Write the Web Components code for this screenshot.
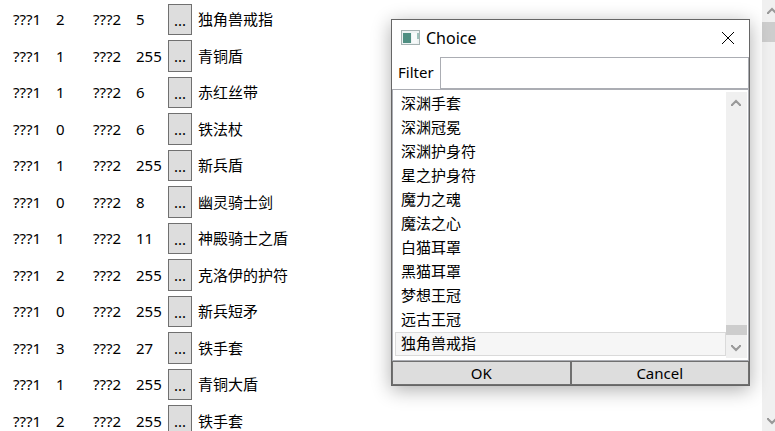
<!DOCTYPE html>
<html lang="zh-CN">
<head>
<meta charset="utf-8">
<title>Choice</title>
<style>
  body {
    margin: 0;
    height: 100vh;
    overflow: hidden;
    background-color: #fff;
    color: #000;
    font: 15px/24px "Noto Sans", "Noto Sans CJK SC", sans-serif;
  }
</style>
</head>
<body>
<item-editor></item-editor>

<script>
class ScrollStrip extends HTMLElement {
  constructor() {
    super();
    this.attachShadow({ mode: "open" });
  }

  connectedCallback() {
    this.shadowRoot.innerHTML = `
    <style>
      :host {
        display: flex;
        flex-direction: column;
        align-items: center;
        background-color: #f0f0f0;
      }
      svg {
        flex: none;
        width: 21px;
        height: 21px;
        fill: none;
        stroke: #999;
        stroke-width: 2;
      }
      .track {
        flex: 1;
        align-self: stretch;
        display: flex;
        flex-direction: column;
        padding: 1px 0 2px;
      }
      :host([at="end"]) .track {
        justify-content: flex-end;
      }
      .thumb {
        height: var(--thumb, 20px);
        background-color: #cdcdcd;
      }
    </style>
    <svg viewBox="0 0 21 21"><path d="M6 14v-1l4-4 4 4v1" /></svg>
    <div class="track"><div class="thumb"></div></div>
    <svg viewBox="0 0 21 21"><path d="M6 8v1l4 4 4-4V8" /></svg>
    `;
  }
}

class ItemRow extends HTMLElement {
  constructor() {
    super();
    this.attachShadow({ mode: "open" });
  }

  connectedCallback() {
    this.shadowRoot.innerHTML = `
    <style>
      :host {
        display: grid;
        grid-template-columns: 43px 37px 43px 32px 24px auto;
        justify-content: start;
        align-items: center;
        white-space: nowrap;
      }
      span {
        padding-bottom: 1px;
      }
      button {
        align-self: stretch;
        padding: 0;
        border: 1px solid #707070;
        background-color: #ddd;
        color: inherit;
        font: inherit;
      }
      .name {
        padding-left: 6px;
      }
    </style>
    <span>???1</span>
    <span>${this.getAttribute("first")}</span>
    <span>???2</span>
    <span>${this.getAttribute("second")}</span>
    <button type="button">...</button>
    <span class="name"><slot></slot></span>
    `;
  }
}

class ChoiceDialog extends HTMLElement {
  constructor() {
    super();
    this.attachShadow({ mode: "open" });
  }

  connectedCallback() {
    const options = this.getAttribute("options").split(",");
    const items = options.map((name, i) =>
      `<li role="option" aria-selected="${i === options.length - 1}">${name}</li>`
    ).join("");

    this.shadowRoot.innerHTML = `
    <style>
      * {
        box-sizing: border-box;
      }
      :host {
        display: block;
        box-sizing: border-box;
        border: 1px solid #666;
        background-color: #fff;
        box-shadow: 0 4px 18px rgba(0, 0, 0, 0.32);
      }
      header {
        display: flex;
        align-items: center;
        gap: 6px;
        height: 37px;
        padding: 0 10px 2px 9px;
        font-size: 16px;
      }
      .icon {
        width: 19px;
        height: 15px;
      }
      .title {
        flex: 1;
      }
      button {
        padding: 0;
        border: 1px solid #707070;
        background-color: #ddd;
        color: inherit;
        font: inherit;
      }
      .close {
        display: grid;
        place-items: center;
        width: 22px;
        height: 22px;
        border: 0;
        background: none;
      }
      .filter {
        display: flex;
        align-items: center;
        padding-left: 6px;
      }
      label {
        width: 42px;
        padding-bottom: 2px;
      }
      input {
        flex: 1;
        min-width: 0;
        height: 32px;
        border: 1px solid #abadb3;
        border-radius: 0;
        outline: 0;
        font: inherit;
      }
      .list {
        display: flex;
        padding: 2px 1px 2px 2px;
        border: 1px solid #abadb3;
      }
      ul {
        flex: 1;
        margin: 0 0 2px;
        padding: 0;
        list-style: none;
      }
      li {
        height: 24px;
        padding: 0 5px;
        border: 1px solid transparent;
        line-height: 20px;
      }
      li[aria-selected="true"] {
        border-color: #dadada;
        background-color: #f6f6f6;
      }
      scroll-strip {
        --thumb: 10px;
        width: 21px;
      }
      footer {
        display: grid;
        grid-template-columns: 1fr 1fr;
        height: 24px;
      }
      footer button {
        line-height: 20px;
      }
    </style>
    <header>
      <svg class="icon" viewBox="0 0 19 15">
        <rect x=".5" y=".5" width="18" height="14" fill="#eef3f3" stroke="#a5b2b2" />
        <path d="M2 3h8v10H2z" fill="#4f8f82" />
        <path d="M11 3h5v10h-5z" fill="#f7fafa" />
        <path d="M17 3v6" stroke="#4f8f82" />
      </svg>
      <span class="title">Choice</span>
      <button class="close" type="button" aria-label="Close">
        <svg width="12" height="12" viewBox="0 0 12 12"><path d="M0 0l12 12M12 0L0 12" stroke="#000" /></svg>
      </button>
    </header>
    <div class="filter">
      <label for="filter">Filter</label>
      <input id="filter" type="text">
    </div>
    <div class="list">
      <ul role="listbox" aria-label="Choice">${items}</ul>
      <scroll-strip at="end"></scroll-strip>
    </div>
    <footer>
      <button type="button">OK</button>
      <button type="button">Cancel</button>
    </footer>
    `;
  }
}

class ItemEditor extends HTMLElement {
  constructor() {
    super();
    this.attachShadow({ mode: "open" });
  }

  connectedCallback() {
    this.shadowRoot.innerHTML = `
    <style>
      :host {
        display: flex;
        position: relative;
        height: 100%;
        overflow: hidden;
      }
      .rows {
        flex: 1;
        display: grid;
        grid-auto-rows: 31px 32px;
        row-gap: 5px;
        padding: 4px 13px 0;
      }
      /* the strip runs past the right edge of the window */
      .page-scroll {
        width: 21px;
        margin-right: -8px;
      }
      choice-dialog {
        position: absolute;
        top: 19px;
        right: 25px;
        width: 359px;
      }
    </style>
    <div class="rows">
      <item-row first="2" second="5">独角兽戒指</item-row>
      <item-row first="1" second="255">青铜盾</item-row>
      <item-row first="1" second="6">赤红丝带</item-row>
      <item-row first="0" second="6">铁法杖</item-row>
      <item-row first="1" second="255">新兵盾</item-row>
      <item-row first="0" second="8">幽灵骑士剑</item-row>
      <item-row first="1" second="11">神殿骑士之盾</item-row>
      <item-row first="2" second="255">克洛伊的护符</item-row>
      <item-row first="0" second="255">新兵短矛</item-row>
      <item-row first="3" second="27">铁手套</item-row>
      <item-row first="1" second="255">青铜大盾</item-row>
      <item-row first="2" second="255">铁手套</item-row>
    </div>
    <scroll-strip class="page-scroll"></scroll-strip>
    <choice-dialog options="深渊手套,深渊冠冕,深渊护身符,星之护身符,魔力之魂,魔法之心,白猫耳罩,黑猫耳罩,梦想王冠,远古王冠,独角兽戒指"></choice-dialog>
    `;
  }
}

customElements.define("scroll-strip", ScrollStrip);
customElements.define("item-row", ItemRow);
customElements.define("choice-dialog", ChoiceDialog);
customElements.define("item-editor", ItemEditor);
</script>
</body>
</html>
